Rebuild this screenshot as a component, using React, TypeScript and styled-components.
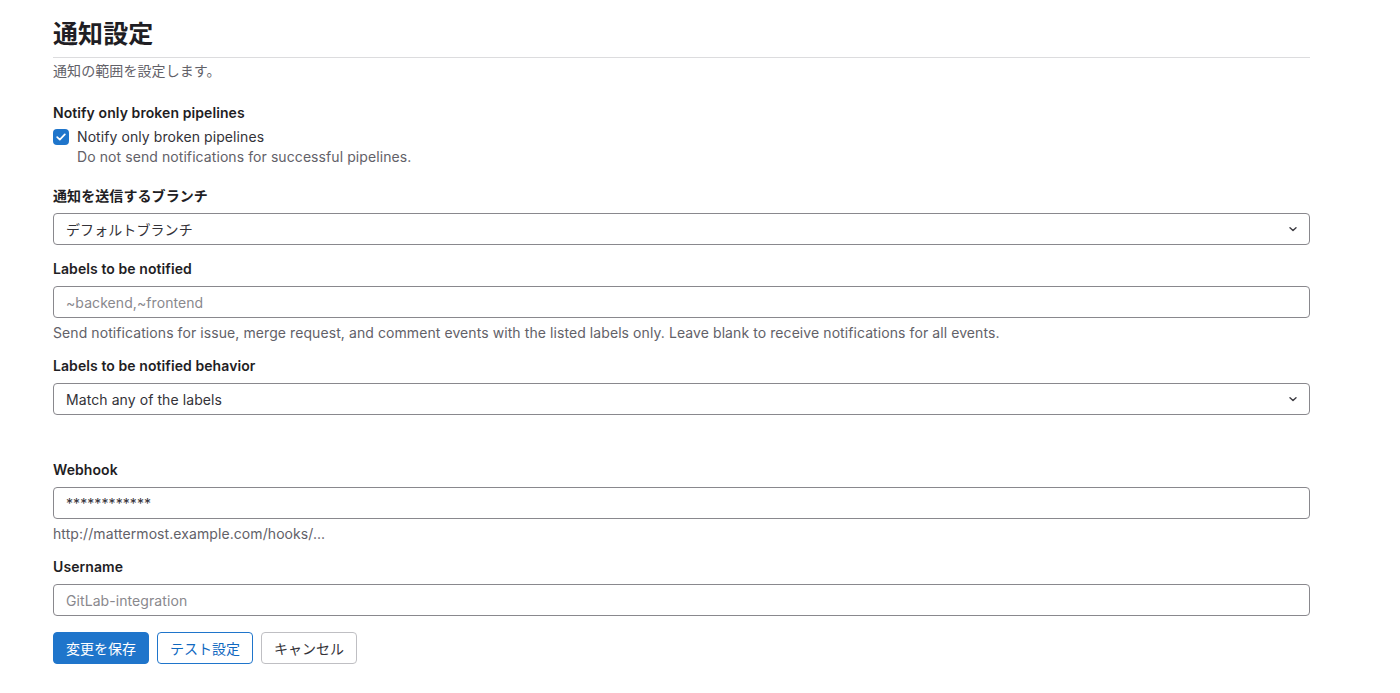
import React from "react";
import styled, { createGlobalStyle } from "styled-components";

const Global = createGlobalStyle`
  html, body { margin: 0; padding: 0; background: #fff; }
  body {
    font-family: Inter, "Noto Sans CJK JP", "Noto Sans", sans-serif;
    font-size: 14px;
    letter-spacing: 0.08px;
    color: #333238;
    -webkit-font-smoothing: antialiased;
  }
  * { box-sizing: border-box; }
`;

const Page = styled.div`
  width: 1257px;
  margin-left: 53px;
  padding-top: 19px;
  padding-bottom: 28px;
`;

const Title = styled.h1`
  margin: 0;
  font-size: 25px;
  line-height: 30px;
  font-weight: 700;
  color: #1f1e24;
  padding-bottom: 8px;
  border-bottom: 1px solid #dcdcde;
`;

const Lead = styled.p`
  margin: 3px 0 0;
  font-size: 14px;
  line-height: 20px;
  color: #626168;
`;

const Group = styled.div<{ $mt?: number }>`
  margin-top: ${(p) => p.$mt ?? 14}px;
  display: flex;
  flex-direction: column;
`;

const Label = styled.label`
  font-weight: 600;
  line-height: 20px;
  color: #1f1e24;
  margin-bottom: 7px;
`;

const SectionLabel = styled(Label)`
  margin-bottom: 4px;
`;

const CheckRow = styled.label`
  display: flex;
  align-items: flex-start;
  gap: 8px;
  cursor: pointer;
`;

const Box = styled.span`
  width: 16px;
  height: 16px;
  margin-top: 2px;
  border-radius: 4px;
  background: #1f75cb;
  display: flex;
  align-items: center;
  justify-content: center;
  flex-shrink: 0;
`;

const CheckText = styled.div`
  display: flex;
  flex-direction: column;
  line-height: 20px;
  color: #333238;
`;

const Help = styled.div<{ $mt?: number }>`
  margin-top: ${(p) => p.$mt ?? 0}px;
  line-height: 20px;
  color: #626168;
`;

const Field = styled.div`
  height: 32px;
  border: 1px solid #89888d;
  border-radius: 4px;
  padding: 0 8px 0 12px;
  display: flex;
  align-items: center;
  justify-content: space-between;
  background: #fff;
  color: #333238;
`;

const Input = styled.input`
  height: 32px;
  width: 100%;
  border: 1px solid #89888d;
  border-radius: 4px;
  padding: 0 12px;
  font: inherit;
  letter-spacing: inherit;
  color: #333238;
  background: #fff;
  outline: none;
  &::placeholder { color: #89888d; }
`;

const Spacer = styled.div`
  height: 31px;
`;

const Actions = styled.div`
  margin-top: 16px;
  display: flex;
  gap: 8px;
`;

const Button = styled.button<{ $variant: "primary" | "confirm" | "default" }>`
  height: 32px;
  padding: 0 12px;
  border-radius: 4px;
  font: inherit;
  font-size: 14px;
  cursor: pointer;
  border: 1px solid
    ${(p) => (p.$variant === "default" ? "#bfbfc3" : "#1f75cb")};
  background: ${(p) => (p.$variant === "primary" ? "#1f75cb" : "#fff")};
  color: ${(p) => (p.$variant === "primary" ? "#fff" : p.$variant === "confirm" ? "#1068bf" : "#333238")};
`;

const Chevron = () => (
  <svg width="16" height="16" viewBox="0 0 16 16" fill="none">
    <path d="M5 6.8L8 9.5L11 6.8" stroke="#3a383f" strokeWidth="1.4" strokeLinecap="round" strokeLinejoin="round" />
  </svg>
);

export default function App() {
  return (
    <>
      <Global />
      <Page>
        <Title>通知設定</Title>
        <Lead>通知の範囲を設定します。</Lead>

        <Group $mt={22}>
          <SectionLabel>Notify only broken pipelines</SectionLabel>
          <CheckRow>
            <Box>
              <svg width="10" height="8" viewBox="0 0 10 8" fill="none">
                <path d="M1.2 4.2L3.8 6.6L8.8 1.4" stroke="#fff" strokeWidth="1.7" strokeLinecap="round" strokeLinejoin="round" />
              </svg>
            </Box>
            <CheckText>
              <span>Notify only broken pipelines</span>
              <Help>Do not send notifications for successful pipelines.</Help>
            </CheckText>
          </CheckRow>
        </Group>

        <Group $mt={19}>
          <Label>通知を送信するブランチ</Label>
          <Field>
            <span>デフォルトブランチ</span>
            <Chevron />
          </Field>
        </Group>

        <Group>
          <Label>Labels to be notified</Label>
          <Input placeholder="~backend,~frontend" />
          <Help $mt={5}>
            Send notifications for issue, merge request, and comment events with the listed labels only. Leave blank to receive notifications for all events.
          </Help>
        </Group>

        <Group $mt={13}>
          <Label>Labels to be notified behavior</Label>
          <Field>
            <span>Match any of the labels</span>
            <Chevron />
          </Field>
        </Group>

        <Spacer />

        <Group>
          <Label>Webhook</Label>
          <Input defaultValue="************" />
          <Help $mt={5}>http://mattermost.example.com/hooks/...</Help>
        </Group>

        <Group $mt={13}>
          <Label>Username</Label>
          <Input placeholder="GitLab-integration" />
        </Group>

        <Actions>
          <Button $variant="primary">変更を保存</Button>
          <Button $variant="confirm">テスト設定</Button>
          <Button $variant="default">キャンセル</Button>
        </Actions>
      </Page>
    </>
  );
}
